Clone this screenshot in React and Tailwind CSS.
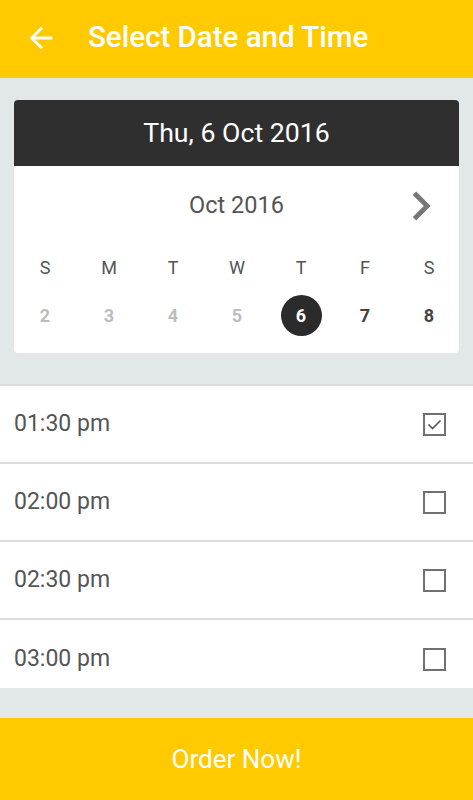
import React, { useState } from "react";

const days = [
  { w: "S", d: 2, past: true },
  { w: "M", d: 3, past: true },
  { w: "T", d: 4, past: true },
  { w: "W", d: 5, past: true },
  { w: "T", d: 6, selected: true },
  { w: "F", d: 7 },
  { w: "S", d: 8 },
];

const times = ["01:30 pm", "02:00 pm", "02:30 pm", "03:00 pm"];

const Checkbox = ({ checked }) => (
  <div className="w-[23px] h-[23px] border-2 border-[#707070] flex items-center justify-center">
    {checked && (
      <svg width="15" height="11" viewBox="0 0 15 11" fill="none">
        <polyline points="1.5,5.5 5.5,9.5 13.5,1.5" stroke="#555" strokeWidth="1.6" />
      </svg>
    )}
  </div>
);

const App = () => {
  const [selected, setSelected] = useState(0);

  return (
    <div className="w-[473px] h-[800px] flex flex-col bg-[#e2e7ea] font-['Roboto',sans-serif] overflow-hidden">
      <div className="h-[78px] shrink-0 bg-[#ffca00] flex items-center pl-[24px] pb-[3px]">
        <svg width="34" height="34" viewBox="0 0 24 24" fill="#fff">
          <path d="M20 11H7.83l5.59-5.59L12 4l-8 8 8 8 1.41-1.41L7.83 13H20v-2z" />
        </svg>
        <span className="ml-[30px] text-white text-[29.5px] font-medium leading-none">
          Select Date and Time
        </span>
      </div>

      <div className="pt-[22px] px-[14px] pb-[31px] shrink-0">
        <div className="rounded-[4px] overflow-hidden bg-white h-[253px]">
          <div className="h-[66px] bg-[#2f2f2f] flex items-center justify-center text-white text-[26.7px]">
            Thu, 6 Oct 2016
          </div>
          <div className="relative h-[80px] flex items-center justify-center text-[#555] text-[23.5px]">
            Oct 2016
            <svg
              className="absolute left-[378px] top-[11px]"
              width="58"
              height="58"
              viewBox="0 0 24 24"
              fill="#777"
            >
              <path d="M10 6L8.59 7.41 13.17 12l-4.58 4.59L10 18l6-6z" />
            </svg>
          </div>
          <div className="grid grid-cols-[repeat(7,64px)] -ml-[1px]">
            {days.map((x, i) => (
              <div key={i} className="flex flex-col items-center">
                <div className="h-[42px] flex items-center text-[#555] text-[18px]">{x.w}</div>
                <div
                  className={
                    x.selected
                      ? "mt-[7px] w-[41px] h-[41px] rounded-full bg-[#2b2b2b] text-white flex items-center justify-center text-[18px] font-bold"
                      : x.past
                      ? "mt-[7px] w-[41px] h-[41px] flex items-center justify-center text-[18px] font-bold text-[#bdbdbd]"
                      : "mt-[7px] w-[41px] h-[41px] flex items-center justify-center text-[18px] font-bold text-[#444]"
                  }
                >
                  {x.d}
                </div>
              </div>
            ))}
          </div>
        </div>
      </div>

      <div className="h-[304px] shrink-0 bg-white border-t-2 border-[#dcdcdc] overflow-hidden">
        {times.map((t, i) => (
          <div
            key={t}
            onClick={() => setSelected(i)}
            className={
              i < times.length - 1
                ? "h-[78px] border-b-2 border-[#dcdcdc] flex items-center justify-between pl-[14px] pr-[27px]"
                : "h-[78px] flex items-center justify-between pl-[14px] pr-[27px]"
            }
          >
            <span className="text-[23px] text-[#555]">{t}</span>
            <Checkbox checked={selected === i} />
          </div>
        ))}
      </div>

      <div className="h-[30px] shrink-0"></div>

      <div className="h-[82px] shrink-0 bg-[#ffca00] text-white text-[26px] flex items-center justify-center">
        Order Now!
      </div>
    </div>
  );
};

export default App;
